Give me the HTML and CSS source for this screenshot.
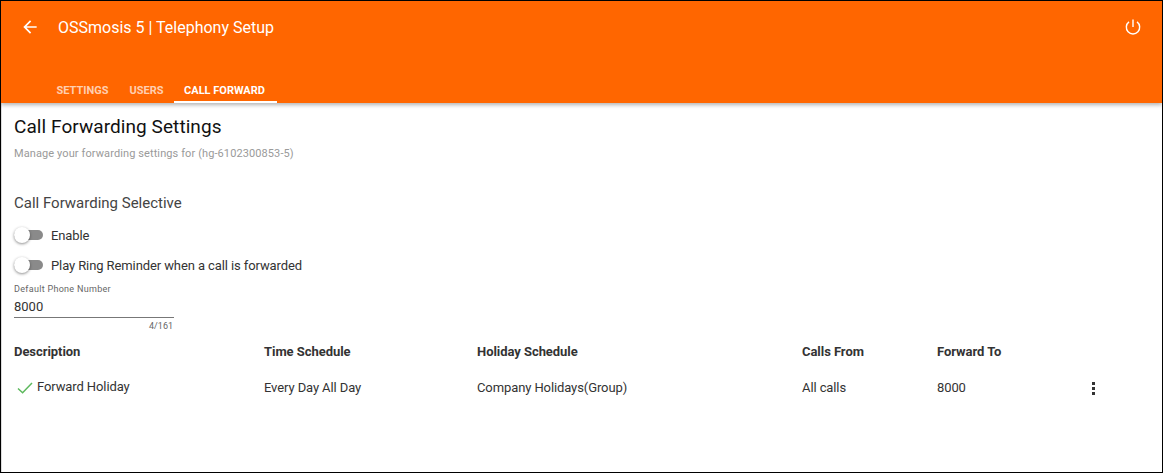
FILE: index.html
```html
<!DOCTYPE html>
<html lang="en">
<head>
<meta charset="utf-8">
<title>OSSmosis 5 | Telephony Setup</title>
<link rel="stylesheet" href="styles.css">
</head>
<body>
<div class="frame">
  <header class="appbar">
    <div class="toolbar">
      <svg class="back" viewBox="0 0 24 24" width="20" height="20"><path d="M20 11H7.83l5.59-5.59L12 4l-8 8 8 8 1.41-1.41L7.83 13H20v-2z"/></svg>
      <div class="title">OSSmosis 5 | Telephony Setup</div>
      <svg class="power" viewBox="0 0 24 24" width="20" height="20"><path d="M12 3v9" fill="none" stroke="#fff" stroke-width="1.7"/><path d="M7.2 5.9a8 8 0 1 0 9.6 0" fill="none" stroke="#fff" stroke-width="1.7"/></svg>
    </div>
    <nav class="tabs">
      <div class="tab">SETTINGS</div>
      <div class="tab">USERS</div>
      <div class="tab active">CALL FORWARD</div>
    </nav>
  </header>
  <main class="content">
    <h1 class="heading">Call Forwarding Settings</h1>
    <p class="sub">Manage your forwarding settings for (hg-6102300853-5)</p>
    <h2 class="section">Call Forwarding Selective</h2>
    <div class="switch-row"><span class="switch"><span class="knob"></span></span><span>Enable</span></div>
    <div class="switch-row"><span class="switch"><span class="knob"></span></span><span>Play Ring Reminder when a call is forwarded</span></div>
    <div class="field">
      <div class="field-label">Default Phone Number</div>
      <div class="field-value">8000</div>
      <div class="field-count">4/161</div>
    </div>
    <div class="table">
      <div class="th">Description</div>
      <div class="th">Time Schedule</div>
      <div class="th">Holiday Schedule</div>
      <div class="th">Calls From</div>
      <div class="th">Forward To</div>
      <div class="th"></div>
      <div class="td desc">
        <svg class="check" viewBox="0 0 16 12" width="16" height="12"><path d="M1 6.5l4.6 4.3L15 1" fill="none" stroke="#5cb85c" stroke-width="1.5"/></svg>
        <span>Forward Holiday</span>
      </div>
      <div class="td">Every Day All Day</div>
      <div class="td">Company Holidays(Group)</div>
      <div class="td">All calls</div>
      <div class="td">8000</div>
      <div class="td"><span class="dots"><i></i><i></i><i></i></span></div>
    </div>
  </main>
</div>
</body>
</html>
```
FILE: styles.css
```css
* { box-sizing: border-box; }
html, body { margin: 0; height: 100%; background: #fff; }
body { font-family: Roboto, "Liberation Sans", sans-serif; color: #212121; overflow: hidden; }
.frame { width: 1163px; height: 473px; border: 1px solid #000; display: flex; flex-direction: column; overflow: hidden; }
.appbar { background: #ff6600; height: 102px; flex: none; box-shadow: 0 2px 4px rgba(0,0,0,.3); display: flex; flex-direction: column; position: relative; z-index: 1; }
.toolbar { display: flex; align-items: center; height: 52px; padding: 0 19px; color: #fff; flex: none; }
.back { fill: #fff; flex: none; }
.title { font-size: 16px; font-weight: 400; margin-left: 18px; flex: 1; color: #fff; }
.power { flex: none; }
.tabs { display: flex; margin-top: auto; padding-left: 45px; height: 34px; }
.tab { font-size: 11px; font-weight: 700; color: rgba(255,255,255,.7); padding: 9px 10.5px 0; display: flex; align-items: center; }
.tab.active { color: #fff; border-bottom: 2px solid #fff; padding: 11px 0 0 10px; width: 103px; }
.content { padding: 0 12px; flex: 1; border-left: 1px solid #ddd; }
.heading { font-size: 19px; font-weight: 400; color: #111; margin: 14px 0 0; line-height: 20px; letter-spacing: .07px; }
.sub { font-size: 11px; color: #9a9a9a; margin: 10px 0 0; line-height: 14px; letter-spacing: .1px; }
.section { font-size: 15px; font-weight: 400; color: #444; margin: 33px 0 0; line-height: 18px; }
.switch-row { display: flex; align-items: center; font-size: 13px; letter-spacing: -.1px; color: #333; height: 30px; }
.switch-row:first-of-type { margin-top: 8px; }
.switch { width: 29px; height: 10px; background: #8a8a8a; border-radius: 5px; position: relative; margin-right: 8px; flex: none; }
.knob { position: absolute; left: 0; top: -3px; width: 16px; height: 16px; border-radius: 50%; background: #fff; box-shadow: 0 1px 3px rgba(0,0,0,.45); }
.field { width: 160px; margin-top: 3px; }
.field-label { font-size: 9px; color: #666; line-height: 12px; letter-spacing: .3px; }
.field-value { font-size: 13px; color: #333; line-height: 16px; padding: 4px 0 2px; border-bottom: 1px solid #777; }
.field-count { font-size: 9px; color: #666; text-align: right; line-height: 12px; margin-top: 2px; padding-right: 1px; }
.table { display: grid; grid-template-columns: 250px 213px 325px 135px 155px 40px; margin-top: 12px; }
.th { font-size: 13px; font-weight: 700; letter-spacing: -.05px; color: #333; line-height: 16px; height: 32px; }
.td { font-size: 13px; letter-spacing: -.1px; color: #333; line-height: 16px; height: 24px; display: flex; align-items: center; }
.desc { gap: 4px; padding-left: 3px; }
.desc span { position: relative; top: -1px; }
.dots { display: flex; flex-direction: column; gap: 2px; }
.dots i { display: block; width: 3px; height: 3px; background: #333; }
```
